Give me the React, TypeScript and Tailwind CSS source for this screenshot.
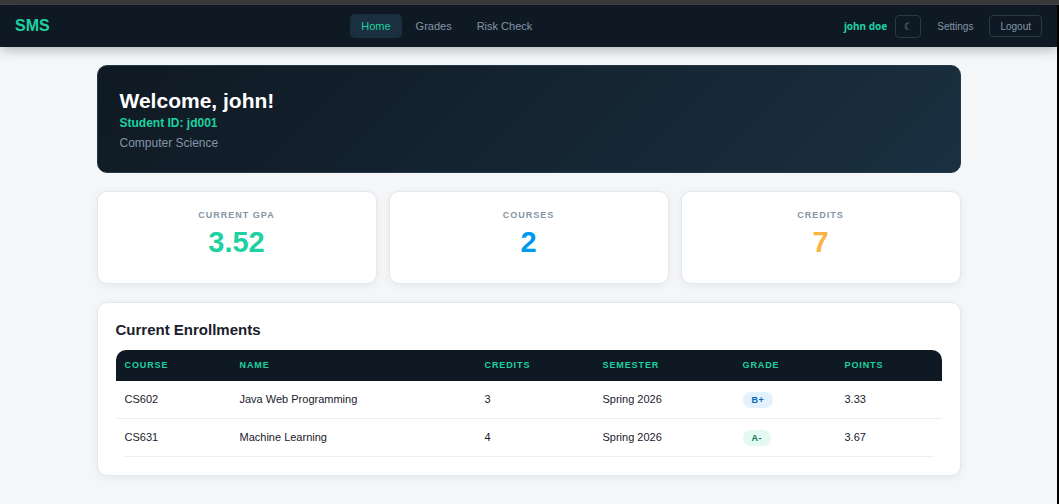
import { clsx } from 'clsx';

const NAV_LINKS = [
  { label: 'Home', active: true },
  { label: 'Grades', active: false },
  { label: 'Risk Check', active: false },
];

const STATS = [
  { label: 'Current GPA', value: '3.52', color: 'text-[#1dd1a1]' },
  { label: 'Courses', value: '2', color: 'text-[#0099f0]' },
  { label: 'Credits', value: '7', color: 'text-[#fbb344]' },
];

const COLUMNS = [
  { label: 'Course', width: 'w-[115px]' },
  { label: 'Name', width: 'w-[245px]' },
  { label: 'Credits', width: 'w-[118px]' },
  { label: 'Semester', width: 'w-[140px]' },
  { label: 'Grade', width: 'w-[102px]' },
  { label: 'Points', width: 'w-[106px]' },
];

const ENROLLMENTS = [
  {
    course: 'CS602',
    name: 'Java Web Programming',
    credits: 3,
    semester: 'Spring 2026',
    grade: 'B+',
    points: '3.33',
    badge: 'bg-[#e1f1fd] text-[#0b66b5]',
  },
  {
    course: 'CS631',
    name: 'Machine Learning',
    credits: 4,
    semester: 'Spring 2026',
    grade: 'A-',
    points: '3.67',
    badge: 'bg-[#e3f9f2] text-[#0b7555]',
  },
];

const cell = 'border-b border-[#edf0f3] px-[9px]';

function Navbar() {
  return (
    <header className="flex h-[42px] items-center justify-between bg-[#0f1923] px-[15px] shadow-[0_2px_12px_rgba(0,0,0,0.3)]">
      <a href="#" className="text-base font-bold text-[#1dd1a1]">
        SMS
      </a>
      <nav className="flex gap-[3px] text-[11px]">
        {NAV_LINKS.map((link) => (
          <a
            key={link.label}
            href="#"
            className={clsx(
              'flex h-6 items-center rounded-[5px] px-[11px]',
              link.active ? 'bg-[#1a2f3f] text-[#1dd1a1]' : 'text-[#8395a7]',
            )}
          >
            {link.label}
          </a>
        ))}
      </nav>
      <div className="flex items-center gap-2 text-[10px] text-[#8395a7]">
        <span className="font-['Noto_Sans',sans-serif] font-bold text-[#1dd1a1]">john doe</span>
        <button
          type="button"
          aria-label="Toggle dark mode"
          className="flex h-[23px] w-[26px] items-center justify-center rounded border border-[#263a4a] font-['DejaVu_Sans',sans-serif]"
        >
          ☾
        </button>
        <a href="#" className="px-2">
          Settings
        </a>
        <button type="button" className="h-[22px] rounded border border-[#263a4a] px-[10px]">
          Logout
        </button>
      </div>
    </header>
  );
}

function WelcomeBanner() {
  return (
    <section className="rounded-[10px] border border-[#22384a] bg-linear-135 from-[#0f1923] to-[#1a3040] px-[22px] pt-[23px] pb-[19px]">
      <h1 className="text-[21px] leading-6 font-bold text-white">Welcome, john!</h1>
      <p className="text-xs leading-5 font-bold text-[#1dd1a1]">Student ID: jd001</p>
      <p className="text-xs leading-5 text-[#8395a7]">Computer Science</p>
    </section>
  );
}

function StatCard({ label, value, color }: { label: string; value: string; color: string }) {
  return (
    <div className="rounded-[10px] border border-[#e2e8f0] bg-white pt-[17px] pb-[23px] text-center shadow-[0_2px_8px_rgba(0,0,0,0.06)]">
      <p className="text-[9px] leading-3 font-bold tracking-[1px] text-[#8395a7] uppercase">
        {label}
      </p>
      <p className={clsx('mt-[3px] text-[29px] leading-9 font-bold', color)}>{value}</p>
    </div>
  );
}

function EnrollmentTable() {
  return (
    <section className="rounded-[10px] border border-[#e2e8f0] bg-white px-[18px] pt-[17px] pb-[18px] shadow-[0_2px_8px_rgba(0,0,0,0.06)]">
      <h2 className="mb-[10px] text-[15px] leading-5 font-bold text-[#1a202c]">
        Current Enrollments
      </h2>
      <div className="overflow-hidden rounded-[10px]">
        <table className="w-full border-separate border-spacing-0 text-left text-[11px] text-[#1a202c]">
          <thead className="bg-[#0f1923] text-[9px] tracking-widest text-[#1dd1a1] uppercase">
            <tr className="h-[31px]">
              {COLUMNS.map((column) => (
                <th
                  key={column.label}
                  scope="col"
                  className={clsx('px-[9px] font-bold', column.width)}
                >
                  {column.label}
                </th>
              ))}
            </tr>
          </thead>
          <tbody>
            {ENROLLMENTS.map((row) => (
              <tr key={row.course} className="h-[38px]">
                <td className={cell}>{row.course}</td>
                <td className={cell}>{row.name}</td>
                <td className={cell}>{row.credits}</td>
                <td className={cell}>{row.semester}</td>
                <td className={cell}>
                  <span
                    className={clsx(
                      'inline-block rounded-full px-[9px] text-[9px] leading-4 font-bold tracking-wider',
                      row.badge,
                    )}
                  >
                    {row.grade}
                  </span>
                </td>
                <td className={cell}>{row.points}</td>
              </tr>
            ))}
          </tbody>
        </table>
      </div>
    </section>
  );
}

export default function App() {
  return (
    <div className="flex min-h-screen flex-col bg-[#f4f6f8] font-['Liberation_Sans',Arial,sans-serif]">
      <div className="h-[5px] border-b border-[#484848] bg-[#3c3c3c]" />
      <div className="grow border-r-2 border-black">
        <Navbar />
        <main className="mx-auto flex max-w-[864px] flex-col gap-[18px] py-[18px]">
          <WelcomeBanner />
          <section className="grid grid-cols-3 gap-3">
            {STATS.map((stat) => (
              <StatCard key={stat.label} {...stat} />
            ))}
          </section>
          <EnrollmentTable />
        </main>
      </div>
    </div>
  );
}
